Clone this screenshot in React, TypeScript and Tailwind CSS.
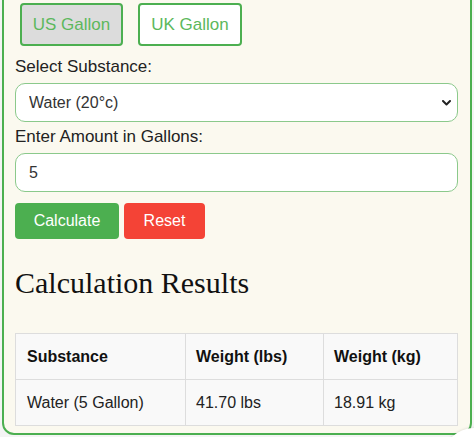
import React from "react";

export default function App() {
  return (
    <div className="relative w-[474px] h-[437px] overflow-hidden bg-[#f4f4f4]" style={{ fontFamily: '"Liberation Sans", Arial, sans-serif' }}>
      <div className="ml-[2px] w-[470px] -mt-[20px] h-[455px] border-2 border-[#4caf50] rounded-[12px] bg-[#fbf9ef] px-[11px] pt-[21px]">
        <div className="flex gap-[15px] pl-[5px]">
          <button className="h-[43px] w-[103px] rounded-[4px] border-2 border-[#4caf50] bg-[#dcdcdc] text-[17px] text-[#5cb85c]">US Gallon</button>
          <button className="h-[43px] w-[104px] rounded-[4px] border-2 border-[#4caf50] bg-white text-[17px] text-[#5cb85c]">UK Gallon</button>
        </div>
        <div className="mt-[9px] text-[17px] leading-[24px] text-[#222]">Select Substance:</div>
        <div className="relative mt-[4px]">
          <select className="appearance-none block w-[443px] h-[39px] rounded-[10px] border border-[#8bc98b] bg-white pl-[13px] text-[16px] text-[#333] outline-none">
            <option>Water (20°c)</option>
          </select>
          <svg className="pointer-events-none absolute right-[8px] top-[17px]" width="9" height="6" viewBox="0 0 9 6">
            <path d="M1 1 L4.5 4.5 L8 1" fill="none" stroke="#222" strokeWidth="2" strokeLinecap="round" strokeLinejoin="round" />
          </svg>
        </div>
        <div className="mt-[3px] text-[17px] leading-[24px] text-[#222]">Enter Amount in Gallons:</div>
        <input
          defaultValue="5"
          className="mt-[4px] block w-[443px] h-[39px] rounded-[10px] border border-[#8bc98b] bg-white pl-[13px] text-[16px] text-[#333] outline-none"
        />
        <div className="mt-[11px] flex gap-[5px]">
          <button className="h-[36px] w-[104px] rounded-[4px] bg-[#4caf50] text-[16px] text-white">Calculate</button>
          <button className="h-[36px] w-[81px] rounded-[4px] bg-[#f44336] text-[16px] text-white">Reset</button>
        </div>
        <h2 className="mt-[26px] text-[30px] leading-[36px] text-[#111]" style={{ fontFamily: '"Liberation Serif", "Times New Roman", serif' }}>
          Calculation Results
        </h2>
        <table className="mt-[32px] w-[443px] border-collapse bg-[#f9f9f9] text-[16px] text-[#111]">
          <thead>
            <tr className="h-[46px]">
              <th className="w-[170px] border border-[#ddd] pl-[11px] text-left font-bold">Substance</th>
              <th className="w-[138px] border border-[#ddd] pl-[10px] text-left font-bold">Weight (lbs)</th>
              <th className="border border-[#ddd] pl-[10px] text-left font-bold">Weight (kg)</th>
            </tr>
          </thead>
          <tbody>
            <tr className="h-[46px]">
              <td className="border border-[#ddd] pl-[11px] text-[#222]">Water (5 Gallon)</td>
              <td className="border border-[#ddd] pl-[10px] text-[#222]">41.70 lbs</td>
              <td className="border border-[#ddd] pl-[10px] text-[#222]">18.91 kg</td>
            </tr>
          </tbody>
        </table>
      </div>
      <div className="absolute right-[-32px] bottom-[-55px] w-[64px] h-[64px] rounded-full bg-white shadow-[0_0_3px_rgba(0,0,0,0.15)]" />
    </div>
  );
}
